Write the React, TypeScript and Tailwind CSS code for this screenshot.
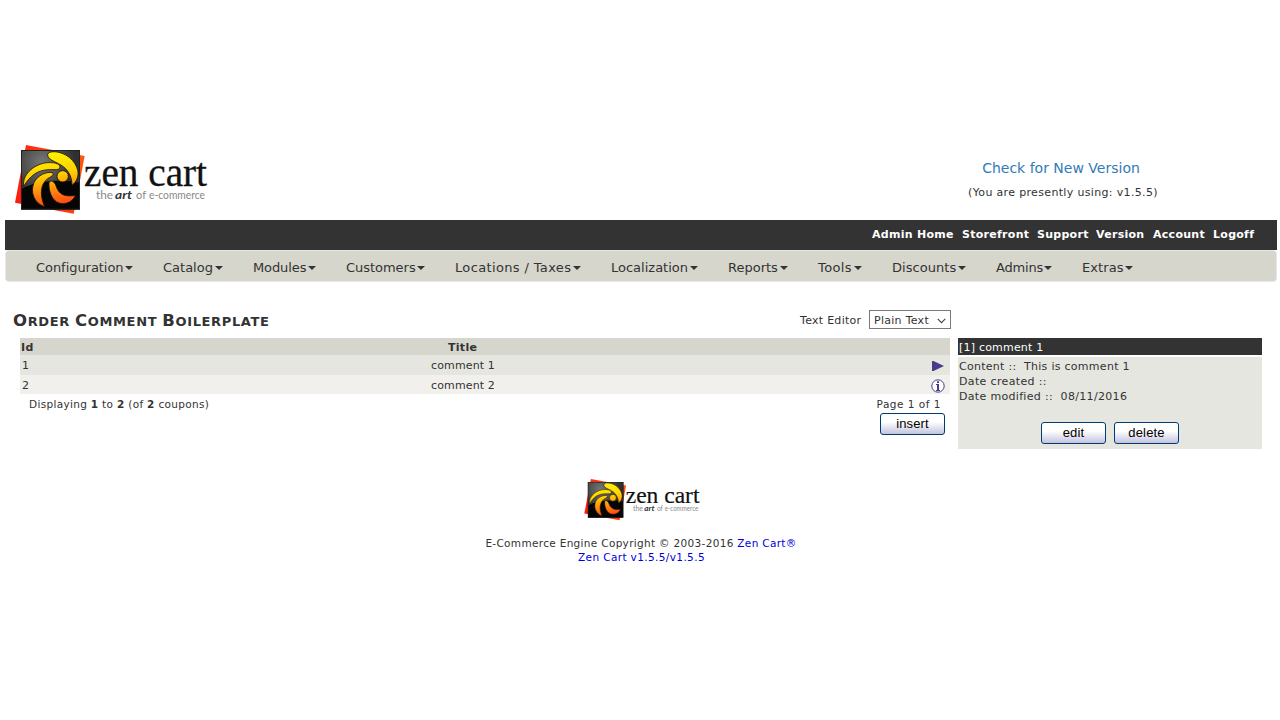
function Logo({ id, className }: { id: string; className: string }) {
  return (
    <svg viewBox="0 0 194 70" className={"overflow-visible " + className} role="img" aria-label="Zen Cart">
      <defs>
        <linearGradient id={id + "f"} gradientUnits="userSpaceOnUse" x1="90" y1="40" x2="115" y2="190">
          <stop offset="0" stopColor="#fff200" />
          <stop offset="0.4" stopColor="#ffd000" />
          <stop offset="0.75" stopColor="#ff8210" />
          <stop offset="1" stopColor="#ff4a10" />
        </linearGradient>
        <linearGradient id={id + "r"} x1="1" y1="0" x2="0" y2="0.4">
          <stop offset="0" stopColor="#ff5a10" />
          <stop offset="1" stopColor="#fb1f0c" />
        </linearGradient>
        <radialGradient id={id + "k"} gradientUnits="userSpaceOnUse" cx="90" cy="60" r="100">
          <stop offset="0" stopColor="#777" />
          <stop offset="1" stopColor="#303030" />
        </radialGradient>
      </defs>
      <g transform="translate(-3 -3) scale(0.33333)">
        <path d="M42 9 L218 42 L185 215 L9 182 Z" fill={"url(#" + id + "r)"} />
        <rect x="27" y="24" width="177" height="179" fill="#050505" />
        <path d="M27 24 H204 V122 C165 112 70 112 27 142 Z" fill={"url(#" + id + "k)"} />
        <rect x="28.5" y="25.5" width="174" height="176" fill="none" stroke="#222" strokeWidth="3" />
        <g fill={"url(#" + id + "f)"} stroke="#1a1208" strokeWidth="2.5">
          <path d="M107 38 C109 27 132 27 150 34 C184 46 204 82 197 105 C194 116 187 125 180 130 C180 108 172 88 154 74 C136 60 106 54 107 38 Z" />
          <path d="M35 133 C30 100 62 70 98 63 C124 59 144 65 144 75 C144 86 128 82 112 83 C76 84 56 100 35 133 Z" />
          <path d="M98 194 C66 184 54 150 66 122 C76 100 104 88 120 92 C132 97 116 104 106 111 C86 126 82 158 98 194 Z" />
          <path d="M111 124 C112 112 128 116 133 134 C140 156 158 166 190 160 C182 182 154 192 134 180 C116 168 110 142 111 124 Z" />
          <circle cx="152" cy="103" r="17" />
        </g>
      </g>
      <text x="69" y="40.5" fontFamily="Liberation Serif, serif" fontSize="39" fill="#111" stroke="#111" strokeWidth="0.3" textLength="123" lengthAdjust="spacingAndGlyphs">zen cart</text>
      <g fontFamily="Lato, sans-serif" fontSize="12" fill="#8a8a8a">
        <text x="81" y="53.5" textLength="17" lengthAdjust="spacingAndGlyphs">the</text>
        <text x="100" y="53.5" textLength="17" lengthAdjust="spacingAndGlyphs" fontWeight="700" fontStyle="italic" fill="#333">art</text>
        <text x="121" y="53.5" textLength="10" lengthAdjust="spacingAndGlyphs">of</text>
        <text x="134" y="53.5" textLength="56" lengthAdjust="spacingAndGlyphs">e-commerce</text>
      </g>
    </svg>
  );
}

const menu = [
  { label: "Configuration", cls: "w-[127px] tracking-[-0.05px]" },
  { label: "Catalog", cls: "w-[90px]" },
  { label: "Modules", cls: "w-[93px] tracking-[-0.1px]" },
  { label: "Customers", cls: "w-[109px] tracking-[-0.03px]" },
  { label: "Locations / Taxes", cls: "w-[156px] tracking-[0.36px]" },
  { label: "Localization", cls: "w-[117px]" },
  { label: "Reports", cls: "w-[90px]" },
  { label: "Tools", cls: "w-[74px] tracking-[0.4px]" },
  { label: "Discounts", cls: "w-[104px] tracking-[0.05px]" },
  { label: "Admins", cls: "w-[86px] tracking-[-0.2px]" },
  { label: "Extras", cls: "w-[81px] tracking-[0.1px]" },
];

const topLinks = [
  { label: "Admin Home", cls: "w-[90px]" },
  { label: "Storefront", cls: "w-[75px]" },
  { label: "Support", cls: "w-[59px]" },
  { label: "Version", cls: "w-[57px]" },
  { label: "Account", cls: "w-[60px]" },
  { label: "Logoff", cls: "w-[64px]" },
];

function GradientButton({ label }: { label: string }) {
  return (
    <button className="flex h-[22px] w-[65px] justify-center rounded-[3px] border border-[#003c74] bg-linear-to-b from-white from-40% to-[#c3c3de] font-['Liberation_Sans',sans-serif] text-[13px] leading-[20px] tracking-[0.15px] text-black">
      {label}
    </button>
  );
}

export default function App() {
  return (
    <div className="h-[720px] w-[1280px] overflow-hidden bg-white pt-[145px] pr-[3px] pl-[5px] font-['DejaVu_Sans',sans-serif] text-[11px] text-[#333]">
      <header className="flex h-[75px] items-start justify-between pl-[10px]">
        <Logo id="top" className="h-[70px] w-[194px]" />
        <div className="mr-[106px] flex w-[216px] flex-col items-center pt-[13px] whitespace-nowrap">
          <a className="mr-[4px] text-[14px] leading-[20px] text-[#337ab7]">Check for New Version</a>
          <span className="mt-[7px] text-[11px] leading-[16px] tracking-[0.34px]">(You are presently using: v1.5.5)</span>
        </div>
      </header>

      <div className="flex h-[30px] justify-end bg-[#333] text-[11px] leading-[30px] font-bold tracking-[0.28px] text-white">
        {topLinks.map((l) => (
          <a key={l.label} className={"whitespace-nowrap " + l.cls}>{l.label}</a>
        ))}
      </div>

      <nav className="flex h-[32px] rounded-[4px] border border-[#e7e7e7] bg-[#d6d6cc] pl-[30px] text-[13px] leading-[30px]">
        {menu.map((m) => (
          <a key={m.label} className={"flex items-center justify-between pr-[30px] whitespace-nowrap " + m.cls}>
            <span className="w-0 pt-[3px]">{m.label}</span>
            <span className="mt-[4px] size-0 border-x-4 border-t-4 border-x-transparent border-t-[#333]" />
          </a>
        ))}
      </nav>

      <main className="flex pt-[26px] pl-[8px]">
        <section className="w-[938px]">
          <div className="flex h-[30px] items-start justify-between">
            <h1 className="flex gap-[5px] pt-[2px] text-[13px] leading-[22px] font-bold tracking-[0.65px] whitespace-nowrap uppercase">
              {["Order", "Comment", "Boilerplate"].map((w) => (
                <span key={w} className="first-letter:text-[16.5px]">{w}</span>
              ))}
            </h1>
            <div className="flex items-start pt-[2px]">
              <label className="w-[69px] text-[11px] leading-[22px] tracking-[0.28px] whitespace-nowrap">Text Editor</label>
              <div className="flex h-[19px] w-[82px] items-start justify-between border border-[#7a7a7a] bg-white pr-[4px] pl-[4px] text-[11px]">
                <span className="leading-[19px] tracking-[0.28px] whitespace-nowrap">Plain Text</span>
                <svg viewBox="0 0 9 6" className="mt-[7px] h-[6px] w-[9px]"><path d="M0.7 0.8 L4.5 4.6 L8.3 0.8" fill="none" stroke="#444" strokeWidth="1.1" /></svg>
              </div>
            </div>
          </div>
          <div className="ml-[7px] w-[930px]">
            <div className="grid h-[17px] grid-cols-[427px_1fr] bg-[#d6d6cc] pl-[1px] leading-[19px] font-bold tracking-[0.3px]">
              <span>Id</span>
              <span>Title</span>
            </div>
            <div className="flex h-[20px] bg-[#e6e6e0] pl-[2px] leading-[22px] tracking-[0.13px]">
              <span className="w-[409px]">1</span>
              <span className="flex-1">comment 1</span>
              <svg viewBox="0 0 12 12" className="mt-[5px] mr-[6px] size-3"><path d="M0 1 H1.5 L12 6 L1.5 11 H0 Z" fill="#483d8b" /></svg>
            </div>
            <div className="flex h-[19px] bg-[#f1f0ec] pl-[2px] leading-[21px] tracking-[0.13px]">
              <span className="w-[409px]">2</span>
              <span className="flex-1">comment 2</span>
              <svg viewBox="0 0 14 14" className="mt-[4px] mr-[5px] size-3.5" fill="#483d8b"><circle cx="7" cy="7" r="6.2" fill="#fff" stroke="#483d8b" strokeWidth="1" /><path d="M6 2.2H8V4H6Z M5 5H8V11H9V12H5V11H6V6H5Z" /></svg>
            </div>
            <div className="flex h-[19px] justify-between pr-[9px] pl-[9px] text-[10.5px] leading-[20px]">
              <span className="tracking-[0.32px] whitespace-nowrap">Displaying <b>1</b> to <b>2</b> (of <b>2</b> coupons)</span>
              <span className="tracking-[0.5px] whitespace-nowrap">Page 1 of 1</span>
            </div>
            <div className="flex justify-end pr-[5px]"><GradientButton label="insert" /></div>
          </div>
        </section>

        <aside className="mt-[30px] ml-[7px] w-[304px]">
          <div className="h-[17px] bg-[#333] pl-[1px] leading-[19px] tracking-[0.2px] text-white">[1] comment 1</div>
          <div className="mt-[2px] h-[92px] bg-[#e6e6e0] pt-[2px] pl-[1px] leading-[15px] whitespace-pre">
            <p className="tracking-[0.28px]">Content ::  This is comment 1</p>
            <p className="tracking-[0.35px]">Date created ::</p>
            <p className="tracking-[0.32px]">Date modified ::  08/11/2016</p>
            <div className="mt-[18px] flex gap-2 pl-[82px]">
              <GradientButton label="edit" />
              <GradientButton label="delete" />
            </div>
          </div>
        </aside>
      </main>

      <footer className="mt-[30px] flex flex-col items-center text-[10.5px] leading-[14px]">
        <Logo id="bottom" className="ml-[2px] h-[42px] w-[117px]" />
        <p className="mt-[15px] tracking-[0.32px]">E-Commerce Engine Copyright © 2003-2016 <a className="text-[#0000dd]">Zen Cart®</a></p>
        <p className="ml-[1px] tracking-[0.38px]"><a className="text-[#0000dd]">Zen Cart v1.5.5/v1.5.5</a></p>
      </footer>
    </div>
  );
}
